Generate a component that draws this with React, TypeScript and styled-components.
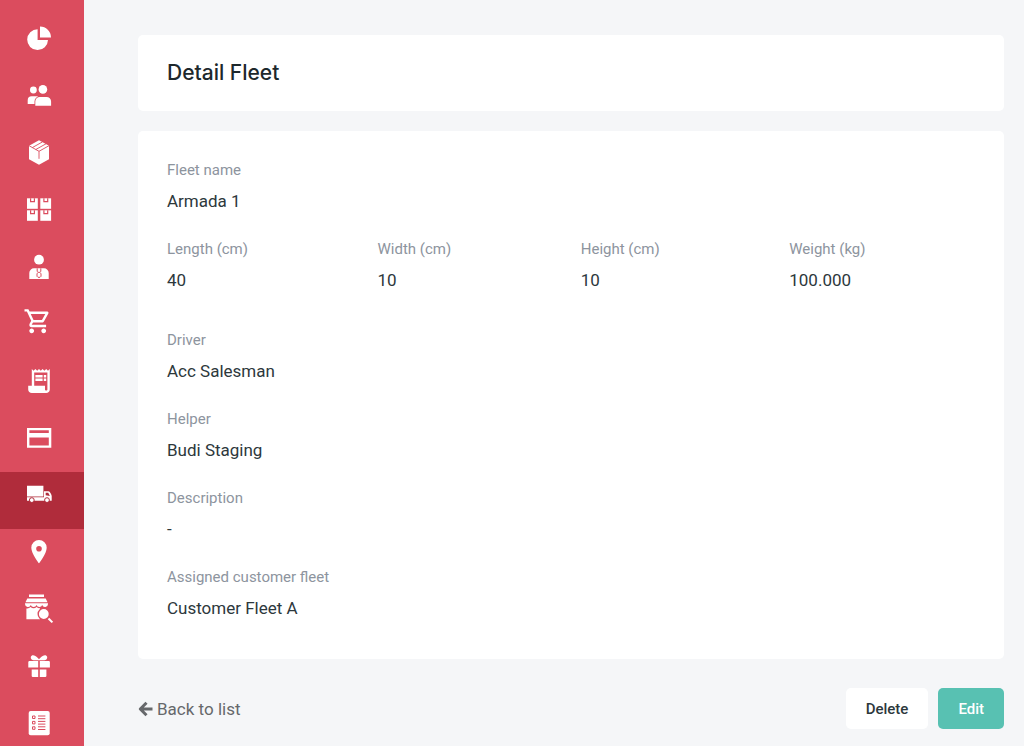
import React from "react";
import styled, { createGlobalStyle } from "styled-components";

const red = "#db4c5e";
const darkRed = "#b02c3b";

const GlobalStyle = createGlobalStyle`
  * { box-sizing: border-box; }
  body {
    margin: 0;
    background: #f5f6f8;
    font-family: Roboto, "Liberation Sans", sans-serif;
    color: #2d383c;
  }
`;

const Page = styled.div`
  display: flex;
  height: 100vh;
  overflow: hidden;
`;

const Sidebar = styled.nav`
  flex: none;
  width: 84px;
  padding-top: 16px;
  background: ${red};
  overflow: hidden;
`;

const NavLink = styled.a<{ $active: boolean }>`
  display: block;
  height: 57px;
  padding: 8px 24px;
  color: ${(p) => (p.$active ? darkRed : red)};
  background: ${(p) => (p.$active ? darkRed : "transparent")};
`;

const NavIcon = styled.svg`
  display: block;
  width: 30px;
  height: 30px;
  fill: #fff;
`;

const Main = styled.main`
  flex: 1;
  min-width: 0;
  overflow: auto;
  padding: 35px 20px 16px 54px;
`;

const Card = styled.section`
  background: #fff;
  border-radius: 5px;
  padding: 0 29px;
  margin-bottom: 20px;
`;

const Title = styled.h1`
  margin: 0;
  font-family: Inter, sans-serif;
  font-size: 21px;
  font-weight: 500;
  line-height: 76px;
  color: #1d282c;
`;

const Details = styled.dl`
  margin: 0;
  padding: 29px 0 13px;
`;

const Dimensions = styled.div`
  display: flex;
  gap: 20px;
  margin-bottom: 12px;
`;

const FieldBox = styled.div`
  flex: 1 1 auto;
  padding-bottom: 18px;
`;

const Label = styled.dt`
  font-size: 15px;
  line-height: 21px;
  color: #8d949e;
`;

const Value = styled.dd`
  margin: 0;
  font-size: 17px;
  line-height: 40px;
`;

const Footer = styled.footer`
  display: flex;
  align-items: center;
  gap: 10px;
  padding-top: 9px;
`;

const BackLink = styled.a`
  display: flex;
  align-items: center;
  gap: 4px;
  margin-right: auto;
  font-size: 17px;
  line-height: 24px;
  color: #66686b;
  text-decoration: none;
`;

const Button = styled.button<{ $primary?: boolean }>`
  height: 41px;
  padding: 0 20px;
  border: 0;
  border-radius: 5px;
  font: 500 15px Roboto, sans-serif;
  color: ${(p) => (p.$primary ? "#fff" : "#2d383c")};
  background: ${(p) => (p.$primary ? "#58c1b2" : "#fff")};
`;

const cut = { fill: "none", stroke: "currentColor" } as const;

const Crate = ({ x, y }: { x: number; y: number }) => (
  <g transform={`translate(${x} ${y})`}>
    <path d="M0 0h10.8v10.5H0z" />
    <path d="M3.6 0v3.4h3.8V0" {...cut} strokeWidth="1.2" />
  </g>
);

const navItems: { name: string; art: React.ReactNode }[] = [
  {
    name: "Dashboard",
    art: <path d="M13.6 5.3V16H24A10.4 10.4 0 1 1 13.6 5.3zM16 2.5A11 11 0 0 1 27 13.5H16z" />,
  },
  {
    name: "Customers",
    art: (
      <>
        <circle cx="9.4" cy="9" r="3.4" />
        <circle cx="18.9" cy="8.4" r="4.3" />
        <path d="M3.7 23v-3.7a4 4 0 0 1 4-4h6V23z" />
        <path d="M11.3 24.8v-4.3a4.5 4.5 0 0 1 4.5-4.5h6.8a4.5 4.5 0 0 1 4.5 4.5v4.3z" stroke="currentColor" strokeWidth="1.6" paintOrder="stroke" />
      </>
    ),
  },
  {
    name: "Products",
    art: (
      <>
        <path d="M15 2.2l10 5.5v13.5l-10 5.6-10-5.6V7.7z" />
        <path d="M5 7.7l10 5.6 10-5.6M15 13.3v7.5M8.3 9.6l10.2-5.7M11.8 11.5L22 5.8" {...cut} strokeWidth="0.9" />
      </>
    ),
  },
  {
    name: "Warehouse",
    art: (
      <>
        <Crate x={3} y={3.3} />
        <Crate x={16.3} y={3.3} />
        <Crate x={3} y={15.3} />
        <Crate x={16.3} y={15.3} />
      </>
    ),
  },
  {
    name: "Salesmen",
    art: (
      <>
        <circle cx="15" cy="7.7" r="4.9" />
        <path d="M5.3 27v-6a4.7 4.7 0 0 1 4.7-4.7h10a4.7 4.7 0 0 1 4.7 4.7v6z" />
        <path d="M13.2 16.3v3l1 1h1.6l1-1v-3M14.2 20.3L13 21.8v2.5l1 1h2l1-1v-2.5l-1.2-1.5" {...cut} strokeWidth="1" />
      </>
    ),
  },
  {
    name: "Orders",
    art: (
      <path
        transform="translate(-.7 -2.2) scale(1.2)"
        d="M15.55 13c.75 0 1.41-.41 1.75-1.03l3.58-6.49A.996.996 0 0 0 20.01 4H5.21l-.94-2H1v2h2l3.6 7.59-1.35 2.44C4.52 15.37 5.48 17 7 17h12v-2H7l1.1-2h7.45zM6.16 6h12.15l-2.76 5H8.53L6.16 6zM7 18c-1.1 0-1.99.9-1.99 2S5.9 22 7 22s2-.9 2-2-.9-2-2-2zm10 0c-1.1 0-1.99.9-1.99 2s.89 2 1.99 2 2-.9 2-2-.9-2-2-2z"
      />
    ),
  },
  {
    name: "Invoices",
    art: (
      <path
        transform="translate(.6 .6) scale(1.2)"
        d="M19.5 3.5L18 2l-1.5 1.5L15 2l-1.5 1.5L12 2l-1.5 1.5L9 2 7.5 3.5 6 2v14H3v3c0 1.66 1.34 3 3 3h12c1.66 0 3-1.34 3-3V2l-1.5 1.5zM19 19c0 .55-.45 1-1 1s-1-.45-1-1v-3H8V5h11v14zM9 7h6v2H9zM16 7h2v2h-2zM9 10h6v2H9zM16 10h2v2h-2z"
      />
    ),
  },
  {
    name: "Payments",
    art: <path fillRule="evenodd" d="M3 5h24.3v19.7H3zM5.4 7.3V10h19.4V7.3zM5.4 14.4v8h19.4v-8z" />,
  },
  {
    name: "Fleet",
    art: (
      <>
        <path d="M3 5.7h16.4v10.8H3zM3 17.3h17v-6h4.5c1.4 0 3.2 3.4 3.2 4.8v4.7H3z" />
        <path d="M21.7 12.8h2.5l1.7 3.2-4.2-.8z" fill="currentColor" />
        <circle cx="7.8" cy="20.1" r="2.4" stroke="currentColor" strokeWidth="1" />
        <circle cx="23" cy="20.1" r="2.4" stroke="currentColor" strokeWidth="1" />
      </>
    ),
  },
  {
    name: "Locations",
    art: (
      <path fillRule="evenodd" d="M15 3a7.7 7.7 0 0 0-7.7 7.7c0 5.8 7.7 15.6 7.7 15.6s7.7-9.8 7.7-15.6A7.7 7.7 0 0 0 15 3zm0 5.9a2.8 2.8 0 1 1 0 5.6 2.8 2.8 0 0 1 0-5.6z" />
    ),
  },
  {
    name: "Find stores",
    art: (
      <>
        <path d="M5 .4h15V3H5zM3.3 4.6h18.4l1.8 3.6h-22zM1 9.2h23v.8a3 3 0 0 1-5.8 1 3 3 0 0 1-5.7 0 3 3 0 0 1-5.7 0A3 3 0 0 1 1 10z" />
        <path d="M2.4 14.4c1.5.3 3-.2 4.2-1.3 1.7 1.6 4.2 1.6 6 0 1 .9 2.200 1.300 3.400 1.200v11H2.400z" />
        <circle cx="19.8" cy="20" r="5.6" stroke="currentColor" strokeWidth="1.4" />
        <path d="M24.5 24.5l3.9 3.9" stroke="#fff" strokeWidth="2" />
      </>
    ),
  },
  {
    name: "Rewards",
    art: (
      <>
        <path d="M15 9.3c-2.3 0-5.5.4-7.4-.9-1.4-1-1-3.6.8-4.1C11.2 3.7 13.5 6.5 15 8.2c1.5-1.7 3.8-4.5 6.6-3.9 1.8.5 2.2 3.1.8 4.1-1.9 1.3-5.1.9-7.4.9z" />
        <path d="M5.1 10h9.1v6.4H4.3v-5.6zM15.8 10h9.3l.8.8v5.6H15.8zM7.7 18.4h6.5V26H8.5l-.8-.8zM15.8 18.4h6.6v6.8l-.8.8h-5.8z" />
      </>
    ),
  },
  {
    name: "Reports",
    art: (
      <>
        <rect x="4.7" y="3" width="21" height="24.3" rx="2" />
        <path d="M8.5 8H11v2.5H8.5zM8.5 13.4H11v2.5H8.5zM8.5 18.8H11v2.5H8.5zM14 8h7.4M14 10.7h7.4M14 13.4h7.4M14 16.1h7.4M14 18.8h7.4M14 21.5h7.4" {...cut} strokeWidth="1" />
      </>
    ),
  },
];

const Field = ({ label, value }: { label: string; value: string }) => (
  <FieldBox>
    <Label>{label}</Label>
    <Value>{value}</Value>
  </FieldBox>
);

export default function App() {
  return (
    <>
      <GlobalStyle />
      <Page>
        <Sidebar>
          {navItems.map(({ name, art }) => (
            <NavLink key={name} href="#" aria-label={name} $active={name === "Fleet"}>
              <NavIcon viewBox="0 0 30 30" aria-hidden="true">{art}</NavIcon>
            </NavLink>
          ))}
        </Sidebar>
        <Main>
          <Card>
            <Title>Detail Fleet</Title>
          </Card>
          <Card>
            <Details>
              <Field label="Fleet name" value="Armada 1" />
              <Dimensions>
                <Field label="Length (cm)" value="40" />
                <Field label="Width (cm)" value="10" />
                <Field label="Height (cm)" value="10" />
                <Field label="Weight (kg)" value="100.000" />
              </Dimensions>
              <Field label="Driver" value="Acc Salesman" />
              <Field label="Helper" value="Budi Staging" />
              <Field label="Description" value="-" />
              <Field label="Assigned customer fleet" value="Customer Fleet A" />
            </Details>
          </Card>
          <Footer>
            <BackLink href="#">
              <svg width="15" height="16" viewBox="0 0 15 16" fill="none" stroke="currentColor" strokeWidth="3" strokeLinejoin="round" aria-hidden="true">
                <path d="M8.5 1.8L2.3 8l6.2 6.2M2.5 8h12" />
              </svg>
              Back to list
            </BackLink>
            <Button type="button">Delete</Button>
            <Button type="button" $primary>Edit</Button>
          </Footer>
        </Main>
      </Page>
    </>
  );
}
